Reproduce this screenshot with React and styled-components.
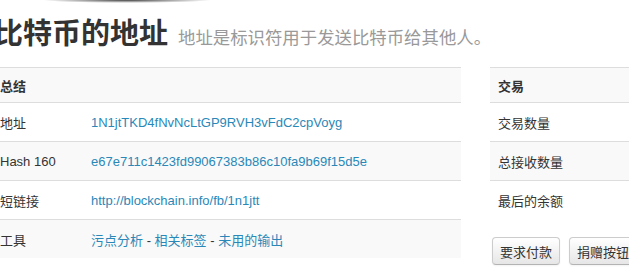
import styled, { createGlobalStyle } from 'styled-components';

const GlobalStyle = createGlobalStyle`
  html, body {
    margin: 0;
    padding: 0;
    background: #fff;
  }
  body {
    font-family: 'Liberation Sans', 'Noto Sans CJK SC', sans-serif;
    font-size: 13px;
    color: #333;
    overflow: hidden;
  }
`;

export default function App() {
  const summary = [
    { label: '地址', value: '1N1jtTKD4fNvNcLtGP9RVH3vFdC2cpVoyg' },
    { label: 'Hash 160', value: 'e67e711c1423fd99067383b86c10fa9b69f15d5e' },
    { label: '短链接', value: 'http://blockchain.info/fb/1n1jtt' }
  ];
  const tools = ['污点分析', '相关标签', '未用的输出'];
  const txRows = ['交易数量', '总接收数量', '最后的余额'];

  return (
    <Page>
      <GlobalStyle />
      <TopShadow />
      <Title>
        <Main>比特币的地址</Main>
        <Sub>地址是标识符用于发送比特币给其他人。</Sub>
      </Title>
      <Columns>
        <LeftCol>
          <Row striped header>
            <Cell bold>总结</Cell>
          </Row>
          {summary.map((r, i) => (
            <Row key={r.label} striped={i % 2 === 1}>
              <Cell>{r.label}</Cell>
              <Value>
                <Link href='#'>{r.value}</Link>
              </Value>
            </Row>
          ))}
          <Row striped>
            <Cell>工具</Cell>
            <Value>
              {tools.map((t, i) => (
                <span key={t}>
                  {i > 0 && ' - '}
                  <Link href='#'>{t}</Link>
                </span>
              ))}
            </Value>
          </Row>
        </LeftCol>
        <RightCol>
          <Row striped header>
            <Cell bold>交易</Cell>
          </Row>
          {txRows.map((t, i) => (
            <Row key={t} striped={i % 2 === 1}>
              <Cell>{t}</Cell>
            </Row>
          ))}
          <Buttons>
            <Button>要求付款</Button>
            <Button>捐赠按钮</Button>
          </Buttons>
        </RightCol>
      </Columns>
    </Page>
  );
}

const Page = styled.div`
  position: relative;
  width: 760px;
  margin-left: -8px;
  height: 275px;
`;

const TopShadow = styled.div`
  position: absolute;
  top: 0;
  left: 50px;
  width: 170px;
  height: 3px;
  background: radial-gradient(ellipse at center top, rgba(0, 0, 0, 0.75), rgba(0, 0, 0, 0) 70%);
`;

const Title = styled.div`
  display: flex;
  align-items: baseline;
  padding-top: 11px;
  height: 40px;
  margin-bottom: 16px;
`;

const Main = styled.h1`
  margin: 0;
  font-family: 'Noto Sans CJK SC', sans-serif;
  font-size: 29px;
  line-height: 40px;
  font-weight: 700;
  color: #333;
  padding-left: 2px;
`;

const Sub = styled.span`
  margin-left: 10px;
  font-family: 'Noto Sans CJK SC', sans-serif;
  font-size: 17.4px;
  color: #999;
`;

const Columns = styled.div`
  display: flex;
  gap: 29px;
`;

const LeftCol = styled.div`
  flex: 0 0 469px;
`;

const RightCol = styled.div`
  flex: 0 0 240px;
`;

const Row = styled.div`
  display: grid;
  grid-template-columns: 99px 1fr;
  align-items: center;
  height: ${(p) => (p.header ? '34px' : '38px')};
  border-top: 1px solid #ddd;
  background: ${(p) => (p.striped ? '#f9f9f9' : '#fff')};
`;

const Cell = styled.div`
  padding: 0 8px;
  font-weight: ${(p) => (p.bold ? 700 : 400)};
  white-space: nowrap;
`;

const Value = styled.div`
  white-space: nowrap;
`;

const Link = styled.a`
  color: #2a88b8;
  text-decoration: none;
`;

const Buttons = styled.div`
  display: flex;
  gap: 9px;
  margin-top: 18px;
  padding-left: 2px;
`;

const Button = styled.button`
  height: 28px;
  padding: 0 7px;
  font-family: 'Liberation Sans', 'Noto Sans CJK SC', sans-serif;
  font-size: 13px;
  color: #333;
  background: linear-gradient(#ffffff, #e6e6e6);
  border: 1px solid #ccc;
  border-bottom-color: #b3b3b3;
  border-radius: 4px;
  box-shadow: inset 0 1px 0 rgba(255, 255, 255, 0.2), 0 1px 2px rgba(0, 0, 0, 0.05);
  white-space: nowrap;
`;
